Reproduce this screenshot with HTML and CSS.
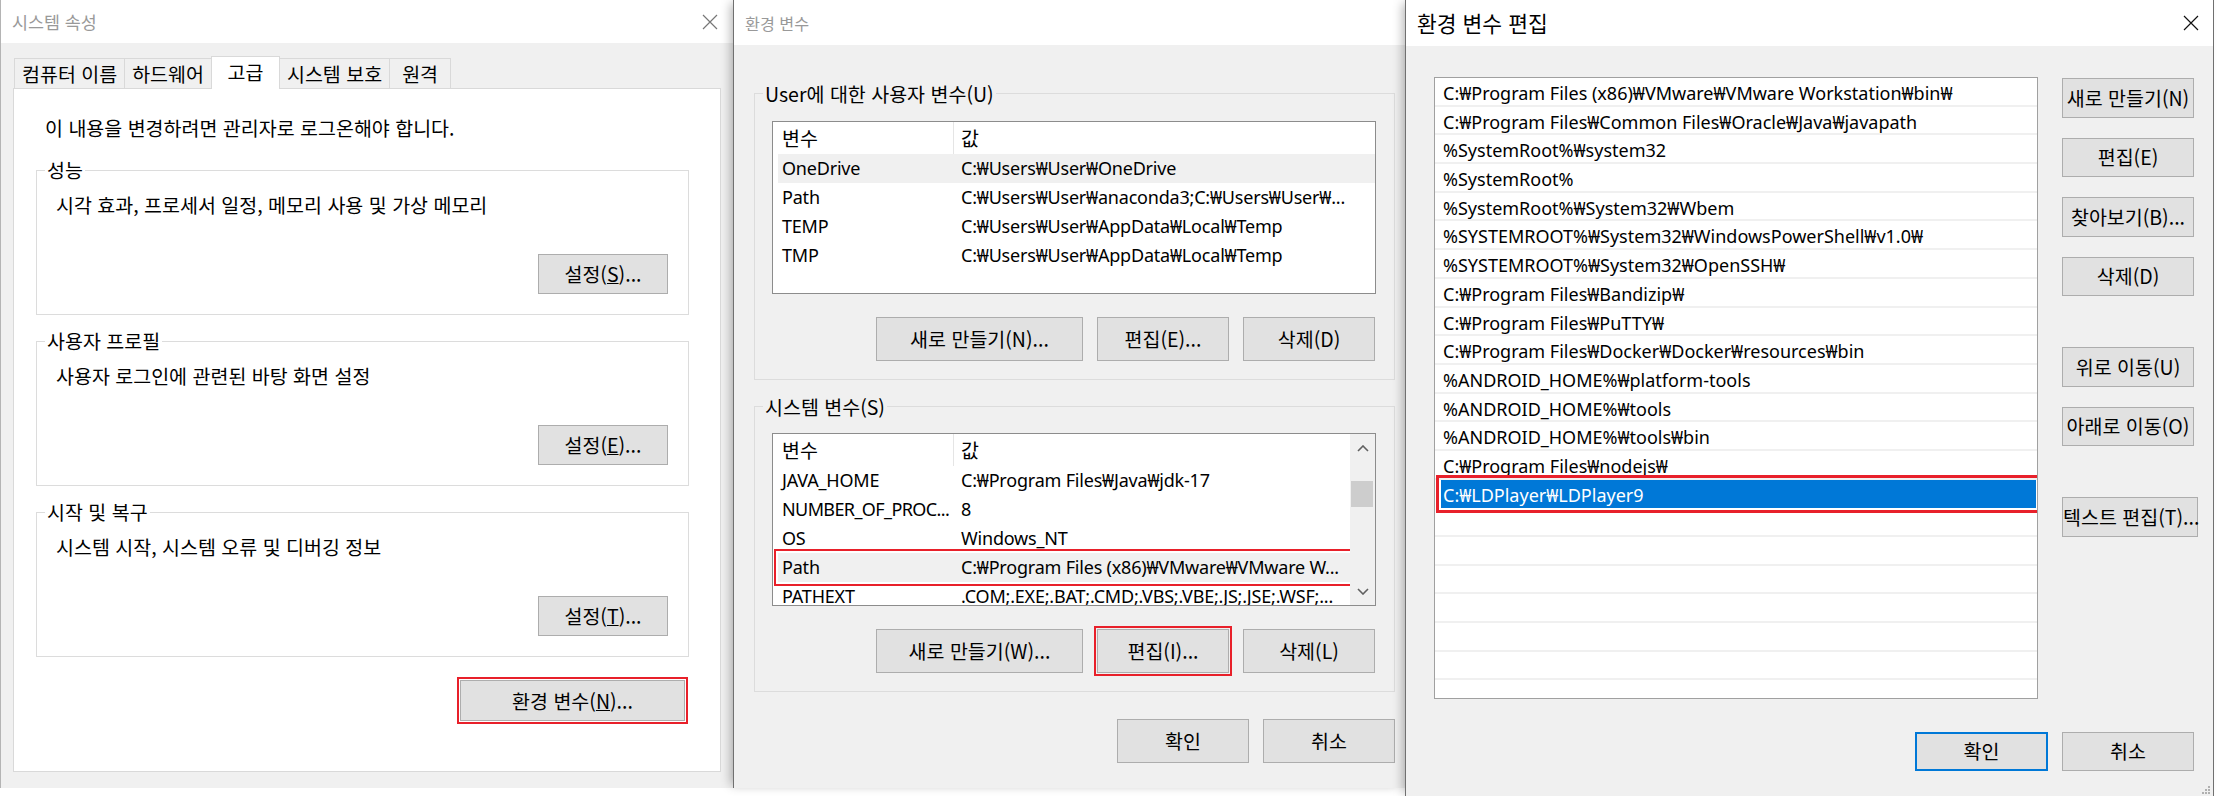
FILE: index.html
```html
<!DOCTYPE html>
<html lang="ko">
<head>
  <meta charset="UTF-8">
  <title>환경 변수</title>
  <link rel="stylesheet" href="styles.css">
</head>
<body>
<div class="desktop">

  <!-- 시스템 속성 -->
  <div class="win sys">
    <div class="titlebar">
      <span class="title">시스템 속성</span>
      <svg class="close" viewBox="0 0 16 16"><path d="M1 1L15 15M15 1L1 15"/></svg>
    </div>
    <div class="tabs">
      <div class="tab">컴퓨터 이름</div>
      <div class="tab">하드웨어</div>
      <div class="tab active">고급</div>
      <div class="tab">시스템 보호</div>
      <div class="tab">원격</div>
    </div>
    <div class="panel">
      <p class="notice">이 내용을 변경하려면 관리자로 로그온해야 합니다.</p>
      <fieldset class="group">
        <legend>성능</legend>
        <p class="desc">시각 효과, 프로세서 일정, 메모리 사용 및 가상 메모리</p>
        <div class="actions"><button class="btn set">설정(<u>S</u>)...</button></div>
      </fieldset>
      <fieldset class="group">
        <legend>사용자 프로필</legend>
        <p class="desc">사용자 로그인에 관련된 바탕 화면 설정</p>
        <div class="actions"><button class="btn set">설정(<u>E</u>)...</button></div>
      </fieldset>
      <fieldset class="group">
        <legend>시작 및 복구</legend>
        <p class="desc">시스템 시작, 시스템 오류 및 디버깅 정보</p>
        <div class="actions"><button class="btn set">설정(<u>T</u>)...</button></div>
      </fieldset>
      <div class="env-row"><button class="btn env-btn mark">환경 변수(<u>N</u>)...</button></div>
    </div>
  </div>

  <!-- 환경 변수 -->
  <div class="win env">
    <div class="titlebar">
      <span class="title">환경 변수</span>
    </div>

    <fieldset class="vars">
      <legend>User에 대한 사용자 변수(U)</legend>
      <div class="lv">
        <div class="lv-body">
          <div class="lv-head"><span>변수</span><span>값</span></div>
          <div class="lv-row hl"><span>OneDrive</span><span>C:₩Users₩User₩OneDrive</span></div>
          <div class="lv-row"><span>Path</span><span>C:₩Users₩User₩anaconda3;C:₩Users₩User₩...</span></div>
          <div class="lv-row"><span>TEMP</span><span>C:₩Users₩User₩AppData₩Local₩Temp</span></div>
          <div class="lv-row"><span>TMP</span><span>C:₩Users₩User₩AppData₩Local₩Temp</span></div>
        </div>
      </div>
      <div class="lv-actions">
        <button class="btn wide">새로 만들기(N)...</button>
        <button class="btn">편집(E)...</button>
        <button class="btn">삭제(D)</button>
      </div>
    </fieldset>

    <fieldset class="vars">
      <legend>시스템 변수(S)</legend>
      <div class="lv">
        <div class="lv-body">
          <div class="lv-head"><span>변수</span><span>값</span></div>
          <div class="lv-row"><span>JAVA_HOME</span><span>C:₩Program Files₩Java₩jdk-17</span></div>
          <div class="lv-row"><span class="trim">NUMBER_OF_PROC...</span><span>8</span></div>
          <div class="lv-row"><span>OS</span><span>Windows_NT</span></div>
          <div class="lv-row hl mark"><span>Path</span><span>C:₩Program Files (x86)₩VMware₩VMware W...</span></div>
          <div class="lv-row"><span>PATHEXT</span><span>.COM;.EXE;.BAT;.CMD;.VBS;.VBE;.JS;.JSE;.WSF;...</span></div>
        </div>
        <div class="sb">
          <span class="sb-arrow"><svg viewBox="0 0 12 7"><path d="M1 6L6 1L11 6"/></svg></span>
          <span class="sb-thumb"></span>
          <span class="sb-arrow down"><svg viewBox="0 0 12 7"><path d="M1 1L6 6L11 1"/></svg></span>
        </div>
      </div>
      <div class="lv-actions">
        <button class="btn wide">새로 만들기(W)...</button>
        <button class="btn mark">편집(I)...</button>
        <button class="btn">삭제(L)</button>
      </div>
    </fieldset>

    <div class="footer">
      <button class="btn">확인</button>
      <button class="btn">취소</button>
    </div>
  </div>

  <!-- 환경 변수 편집 -->
  <div class="win edit">
    <div class="titlebar">
      <span class="title">환경 변수 편집</span>
      <svg class="close" viewBox="0 0 16 16"><path d="M1 1L15 15M15 1L1 15"/></svg>
    </div>
    <div class="edit-body">
      <div class="pl">
        <div class="pl-row">C:₩Program Files (x86)₩VMware₩VMware Workstation₩bin₩</div>
        <div class="pl-row">C:₩Program Files₩Common Files₩Oracle₩Java₩javapath</div>
        <div class="pl-row">%SystemRoot%₩system32</div>
        <div class="pl-row">%SystemRoot%</div>
        <div class="pl-row">%SystemRoot%₩System32₩Wbem</div>
        <div class="pl-row">%SYSTEMROOT%₩System32₩WindowsPowerShell₩v1.0₩</div>
        <div class="pl-row">%SYSTEMROOT%₩System32₩OpenSSH₩</div>
        <div class="pl-row">C:₩Program Files₩Bandizip₩</div>
        <div class="pl-row">C:₩Program Files₩PuTTY₩</div>
        <div class="pl-row">C:₩Program Files₩Docker₩Docker₩resources₩bin</div>
        <div class="pl-row">%ANDROID_HOME%₩platform-tools</div>
        <div class="pl-row">%ANDROID_HOME%₩tools</div>
        <div class="pl-row">%ANDROID_HOME%₩tools₩bin</div>
        <div class="pl-row">C:₩Program Files₩nodejs₩</div>
        <div class="pl-row sel mark">C:₩LDPlayer₩LDPlayer9</div>
        <div class="pl-row"></div>
        <div class="pl-row"></div>
        <div class="pl-row"></div>
        <div class="pl-row"></div>
        <div class="pl-row"></div>
        <div class="pl-row"></div>
        <div class="pl-row"></div>
      </div>
      <div class="side">
        <button class="btn">새로 만들기(N)</button>
        <button class="btn">편집(E)</button>
        <button class="btn">찾아보기(B)...</button>
        <button class="btn">삭제(D)</button>
        <button class="btn sp">위로 이동(U)</button>
        <button class="btn">아래로 이동(O)</button>
        <button class="btn sp text-edit">텍스트 편집(T)...</button>
      </div>
    </div>
    <div class="footer">
      <button class="btn ok">확인</button>
      <button class="btn">취소</button>
    </div>
    <svg class="grip" viewBox="0 0 10 10"><path d="M8 2h2v2H8zM5 5h2v2H5zM8 5h2v2H8zM2 8h2v2H2zM5 8h2v2H5zM8 8h2v2H8z"/></svg>
  </div>

</div>
</body>
</html>
```

FILE: styles.css
```css
* {
  box-sizing: border-box;
}

body {
  margin: 0;
  background: #fff;
  font-family: "Noto Sans CJK KR", sans-serif;
  font-size: 19.5px;
  line-height: 24px;
  color: #000;
}

p {
  margin: 0;
}

.desktop {
  display: flex;
  align-items: flex-start;
  width: 2217px;
  height: 796px;
  overflow: hidden;
}

/* 창 공통 */
.win {
  display: flex;
  flex-direction: column;
  flex-shrink: 0;
  background: #f0f0f0;
  overflow: hidden;
}

.titlebar {
  display: flex;
  align-items: center;
  justify-content: space-between;
  flex-shrink: 0;
  background: #fff;
}

.title {
  color: #999;
}

.close {
  width: 16px;
  height: 16px;
  fill: none;
  stroke: #777;
  stroke-width: 1.2;
}

.btn {
  font: inherit;
  color: #000;
  background: #e1e1e1;
  border: 1px solid #adadad;
  padding: 0;
  white-space: nowrap;
}

/* 빨간 표시 상자 */
.mark {
  outline: 2px solid #e8202a;
  outline-offset: 1px;
}

/* 시스템 속성 */
.sys {
  width: 733px;
  height: 788px;
  border-left: 1px solid #b4b4b4;
}

.sys .titlebar {
  height: 43px;
  padding: 0 15px 0 11px;
}

.sys .title {
  font-size: 17.4px;
}

.tabs {
  display: flex;
  align-items: flex-end;
  height: 32px;
  margin: 13px 0 0 13px;
}

.tab {
  height: 30px;
  min-width: 62px;
  padding: 0 7px;
  line-height: 30px;
  text-align: center;
  background: #f0f0f0;
  border: 1px solid #d9d9d9;
  border-bottom: none;
  margin-right: -1px;
  white-space: nowrap;
}

.tab.active {
  position: relative;
  z-index: 1;
  height: 33px;
  min-width: 69px;
  margin-bottom: -1px;
  line-height: 30px;
  background: #fff;
}

.panel {
  height: 684px;
  margin: 0 12px;
  padding-top: 27px;
  background: #fff;
  border: 1px solid #d9d9d9;
}

.notice {
  padding-left: 31px;
}

.group {
  width: 653px;
  margin: 18px 0 0 22px;
  padding: 11px 20px 20px 19px;
  border: 1px solid #dcdcdc;
}

.group + .group {
  margin-top: 14px;
}

.group legend {
  margin-left: -11px;
  padding: 0 2px;
}

.actions {
  display: flex;
  justify-content: flex-end;
  margin-top: 37px;
}

.set {
  width: 130px;
  height: 40px;
}

.env-row {
  display: flex;
  justify-content: flex-end;
  margin-top: 23px;
  padding-right: 35px;
}

.env-btn {
  width: 225px;
  height: 41px;
}

/* 환경 변수 */
.env {
  width: 672px;
  height: 788px;
  border-left: 1px solid #707070;
  box-shadow: -5px 0 10px -3px rgba(0, 0, 0, 0.3);
}

.env .titlebar {
  height: 45px;
  padding-left: 11px;
}

.env .title {
  font-size: 16.2px;
}

.vars {
  width: 641px;
  margin: 36.5px 0 0 20px;
  padding: 15.5px 18px 18px 17px;
  border: 1px solid #dcdcdc;
}

.vars + .vars {
  margin-top: 14.5px;
  padding-top: 14.5px;
}

.vars legend {
  margin-left: -9px;
  padding: 0 2px;
}

.lv {
  display: flex;
  height: 173px;
  background: #fff;
  border: 1px solid #8c8c8c;
}

.lv-body {
  flex: 1;
  padding-left: 5px;
  overflow: hidden;
}

.lv-head,
.lv-row {
  display: grid;
  grid-template-columns: 175px 394px;
  white-space: nowrap;
}

.lv-head {
  height: 32px;
  line-height: 32px;
}

.lv-head span:first-child {
  padding-left: 4px;
}

.lv-head span + span {
  border-left: 1px solid #e5e5e5;
  padding-left: 7px;
}

.lv-row {
  height: 29px;
  font-family: "Noto Sans", "Noto Sans CJK KR", sans-serif;
  font-size: 18px;
  line-height: 29px;
  letter-spacing: -0.2px;
}

.lv-row span {
  overflow: hidden;
}

.lv-row span:first-child {
  padding-left: 4px;
}

.lv-row span + span {
  padding-left: 8px;
}

.lv-row .trim {
  letter-spacing: -0.6px;
}

.lv-row.hl {
  background: #f0f0f0;
}

.lv-row.mark {
  outline-offset: 2px;
}

.sb {
  display: flex;
  flex-direction: column;
  width: 25px;
  background: #f0f0f0;
}

.sb-arrow {
  display: flex;
  align-items: center;
  justify-content: center;
  height: 28px;
}

.sb-arrow.down {
  margin-top: auto;
}

.sb-arrow svg {
  width: 12px;
  height: 7px;
  fill: none;
  stroke: #606060;
  stroke-width: 1.6;
}

.sb-thumb {
  height: 26px;
  margin: 19px 2px 0 1px;
  background: #cdcdcd;
}

.lv-actions {
  display: flex;
  justify-content: flex-end;
  gap: 14px;
  margin: 23px 1px 0 0;
}

.lv-actions .btn {
  width: 132px;
  height: 44px;
}

.lv-actions .btn.wide {
  width: 207px;
}

.env .footer {
  display: flex;
  justify-content: flex-end;
  gap: 14px;
  margin: 27px 10px 0 0;
}

.env .footer .btn {
  width: 132px;
  height: 44px;
}

/* 환경 변수 편집 */
.edit {
  position: relative;
  width: 809px;
  height: 796px;
  border-left: 1px solid #707070;
  border-right: 1px solid #707070;
  box-shadow: -5px 0 10px -3px rgba(0, 0, 0, 0.3);
}

.edit .titlebar {
  height: 46px;
  padding: 0 14px 0 11px;
}

.edit .title {
  font-size: 21.5px;
  color: #000;
}

.edit .close {
  stroke: #111;
}

.edit-body {
  display: flex;
  align-items: flex-start;
  margin: 31px 0 0 28px;
}

.pl {
  width: 604px;
  height: 622px;
  flex-shrink: 0;
  background: #fff;
  border: 1px solid #a0a0a0;
  overflow: hidden;
}

.pl-row {
  height: 28.7px;
  padding: 4px 0 0 8px;
  font-family: "Noto Sans", "Noto Sans CJK KR", sans-serif;
  font-size: 18px;
  line-height: 22.7px;
  white-space: nowrap;
  border-bottom: 2px solid #f0f0f0;
}

.pl-row.sel {
  margin: 0 1px 0 6px;
  padding-left: 2px;
  color: #fff;
  background: #0078d7;
  border-bottom-color: #0078d7;
  outline-width: 3px;
  outline-offset: 2px;
}

.side {
  display: flex;
  flex-direction: column;
  gap: 20px;
  margin-left: 24px;
  padding-top: 1px;
}

.side .btn {
  width: 132px;
  height: 39.5px;
}

.side .sp {
  margin-top: 31px;
}

.side .text-edit {
  width: 136px;
}

.edit .footer {
  display: flex;
  justify-content: flex-end;
  gap: 14px;
  margin-top: 33px;
  padding-right: 19px;
}

.edit .footer .btn {
  width: 132px;
  height: 38.5px;
}

.edit .footer .ok {
  width: 133px;
  border: 2px solid #0078d7;
}

.grip {
  position: absolute;
  right: 3px;
  bottom: 2px;
  width: 10px;
  height: 10px;
  fill: #b0b0b0;
}
```
